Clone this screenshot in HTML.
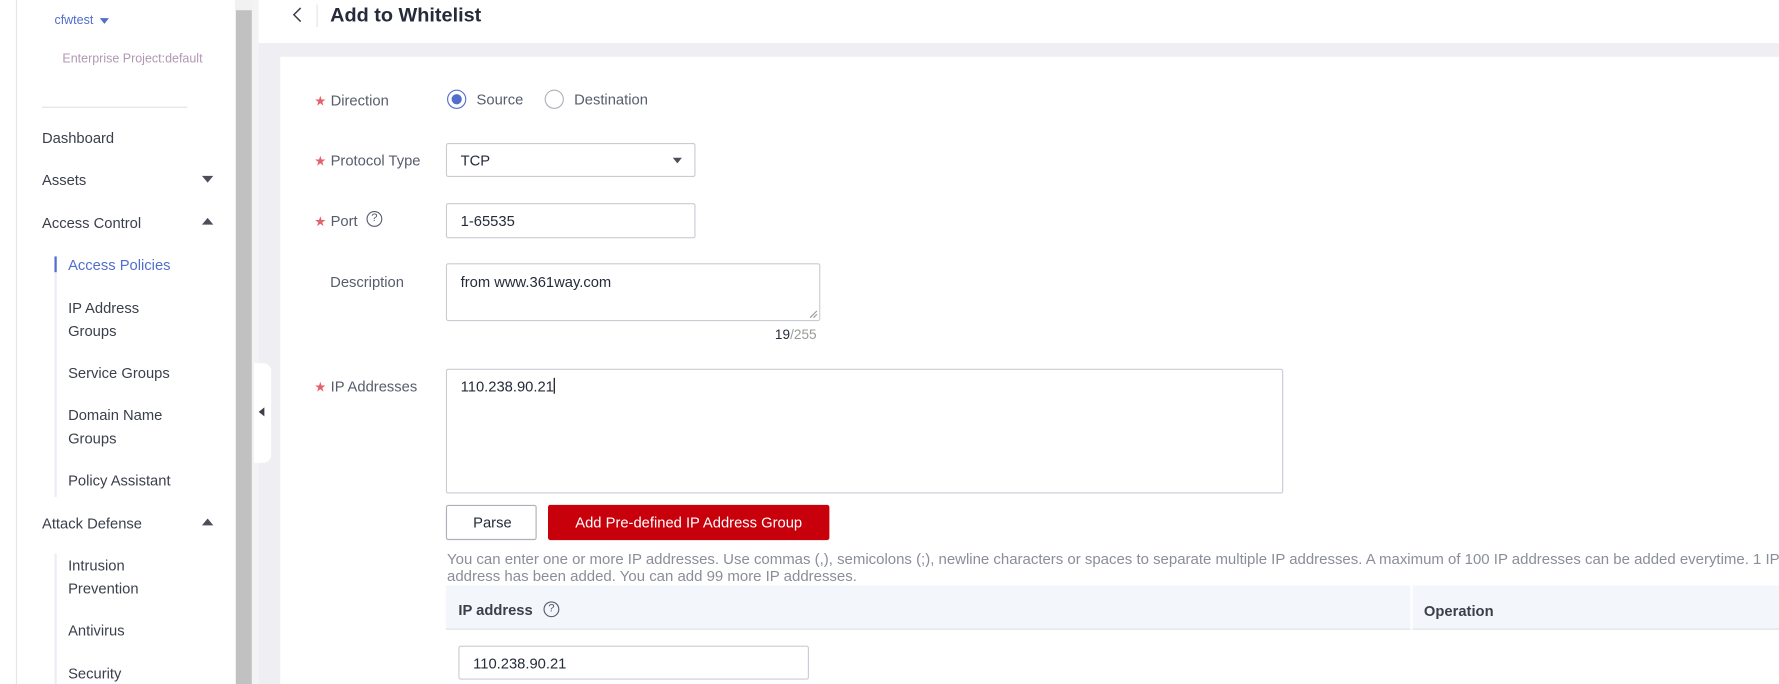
<!DOCTYPE html>
<html><head><meta charset="utf-8"><style>
*{box-sizing:border-box;margin:0;padding:0}
html,body{width:1779px;height:684px;overflow:hidden;background:#fff}
#w{position:absolute;left:0;top:0;width:1568px;height:603px;overflow:hidden;transform:scale(1.1346);transform-origin:0 0;font-family:"Liberation Sans",Arial,sans-serif;color:#252b3a;font-size:13px}
.a{position:absolute;white-space:nowrap}
.m{font-size:13px;color:#3a3f4b}
.s{font-size:13px;color:#575d6c}
.lbl{font-size:13px;color:#575d6c}
.st{color:#e5606a;font-size:12px}
.box{position:absolute;border:1px solid #c9ccd3;border-radius:2px;background:#fff}
.tri-d{width:0;height:0;border-left:5px solid transparent;border-right:5px solid transparent;border-top:6px solid #4a4f5a;position:absolute}
.tri-u{width:0;height:0;border-left:5px solid transparent;border-right:5px solid transparent;border-bottom:6px solid #4a4f5a;position:absolute}
.q{position:absolute;width:14px;height:14px;border:1.2px solid #575d6c;border-radius:50%;font-size:10px;text-align:center;line-height:12px;color:#575d6c}
</style></head><body><div id="w">
<div class="a" style="left:14px;top:0;width:1px;height:603px;background:#e6e6e6"></div>
<div class="a" style="left:48px;top:12px;font-size:11px;color:#526ecc">cfwtest</div>
<div class="tri-d" style="left:88px;top:16px;border-top-color:#526ecc;border-left-width:4px;border-right-width:4px;border-top-width:5px"></div>
<div class="a" style="left:55px;top:46px;font-size:11px;color:#b197b4">Enterprise Project:default</div>
<div class="a" style="left:37px;top:94px;width:128px;height:1px;background:#e0e2e6"></div>
<div class="a m" style="left:37px;top:114px">Dashboard</div>
<div class="a m" style="left:37px;top:151px">Assets</div>
<div class="tri-d" style="left:178px;top:155px"></div>
<div class="a m" style="left:37px;top:189px">Access Control</div>
<div class="tri-u" style="left:178px;top:192px"></div>
<div class="a" style="left:48px;top:226px;width:2px;height:14px;background:#526ecc"></div>
<div class="a" style="left:48px;top:240px;width:2px;height:198px;background:#eceef1"></div>
<div class="a m" style="left:60px;top:226px;color:#526ecc">Access Policies</div>
<div class="a m" style="left:60px;top:264px">IP Address</div>
<div class="a m" style="left:60px;top:284px">Groups</div>
<div class="a m" style="left:60px;top:321px">Service Groups</div>
<div class="a m" style="left:60px;top:358px">Domain Name</div>
<div class="a m" style="left:60px;top:379px">Groups</div>
<div class="a m" style="left:60px;top:416px">Policy Assistant</div>
<div class="a m" style="left:37px;top:454px">Attack Defense</div>
<div class="tri-u" style="left:178px;top:457px"></div>
<div class="a" style="left:48px;top:488px;width:2px;height:115px;background:#eceef1"></div>
<div class="a m" style="left:60px;top:491px">Intrusion</div>
<div class="a m" style="left:60px;top:511px">Prevention</div>
<div class="a m" style="left:60px;top:548px">Antivirus</div>
<div class="a m" style="left:60px;top:586px">Security</div>
<div class="a" style="left:207px;top:0;width:15px;height:603px;background:#f1f1f1"></div>
<div class="a" style="left:208px;top:9px;width:14px;height:594px;background:#c1c1c1"></div>
<div class="a" style="left:222px;top:0;width:6px;height:603px;background:#f3f3f6"></div>
<div class="a" style="left:228px;top:0;width:1340px;height:38px;background:#fff"></div>
<svg class="a" style="left:256px;top:5px" width="12" height="16"><path d="M9 2 L3 8 L9 14" fill="none" stroke="#3a3f4b" stroke-width="1.3"/></svg>
<div class="a" style="left:279px;top:4px;width:1px;height:20px;background:#e3e3e3"></div>
<div class="a" style="left:291px;top:3px;font-size:17.5px;font-weight:bold;color:#252b3a">Add to Whitelist</div>
<div class="a" style="left:228px;top:38px;width:1340px;height:12px;background:#eeeef3"></div>
<div class="a" style="left:228px;top:50px;width:19px;height:553px;background:#eeeef3"></div>
<div class="a" style="left:224px;top:320px;width:15px;height:88px;background:#fff;border-radius:0 7px 7px 0"></div>
<div class="a" style="left:228px;top:359px;width:0;height:0;border-top:4px solid transparent;border-bottom:4px solid transparent;border-right:5px solid #3a3f4b"></div>
<div class="a lbl" style="left:277px;top:81px"><span class="st">★</span> Direction</div>
<div class="a" style="left:394px;top:79px;width:17px;height:17px;border:1px solid #526ecc;border-radius:50%"></div>
<div class="a" style="left:398px;top:83px;width:9px;height:9px;background:#526ecc;border-radius:50%"></div>
<div class="a s" style="left:420px;top:80px">Source</div>
<div class="a" style="left:480px;top:79px;width:17px;height:17px;border:1px solid #adb0b8;border-radius:50%"></div>
<div class="a s" style="left:506px;top:80px">Destination</div>
<div class="a lbl" style="left:277px;top:134px"><span class="st">★</span> Protocol Type</div>
<div class="box" style="left:393px;top:126px;width:220px;height:30px"></div>
<div class="a" style="left:406px;top:134px;color:#252b3a">TCP</div>
<div class="tri-d" style="left:593px;top:139px;border-left-width:4px;border-right-width:4px;border-top-width:5px"></div>
<div class="a lbl" style="left:277px;top:187px"><span class="st">★</span> Port</div>
<div class="q" style="left:323px;top:186px">?</div>
<div class="box" style="left:393px;top:179px;width:220px;height:31px"></div>
<div class="a" style="left:406px;top:187px">1-65535</div>
<div class="a lbl" style="left:291px;top:241px">Description</div>
<div class="box" style="left:393px;top:232px;width:330px;height:51px"></div>
<div class="a" style="left:406px;top:241px">from www.361way.com</div>
<svg class="a" style="left:713px;top:273px" width="8" height="8"><path d="M7 1 L1 7 M7 4 L4 7" stroke="#999" stroke-width="1"/></svg>
<div class="a" style="left:683px;top:288px;font-size:12px;color:#999"><span style="color:#252b3a">19</span>/255</div>
<div class="a lbl" style="left:277px;top:333px"><span class="st">★</span> IP Addresses</div>
<div class="box" style="left:393px;top:325px;width:738px;height:110px"></div>
<div class="a" style="left:406px;top:333px">110.238.90.21<span style="display:inline-block;width:1px;height:14px;background:#000;vertical-align:-2px"></span></div>
<div class="box" style="left:393px;top:445px;width:80px;height:31px;border-color:#adb0b8"></div>
<div class="a" style="left:417px;top:453px">Parse</div>
<div class="a" style="left:483px;top:445px;width:248px;height:31px;background:#c7000b;border-radius:2px;color:#fff;text-align:center;line-height:31px">Add Pre-defined IP Address Group</div>
<div class="a" style="left:394px;top:485px;font-size:13.2px;color:#8a8e99;line-height:15px">You can enter one or more IP addresses. Use commas (,), semicolons (;), newline characters or spaces to separate multiple IP addresses. A maximum of 100 IP addresses can be added everytime. 1 IP<br>address has been added. You can add 99 more IP addresses.</div>
<div class="a" style="left:393px;top:516px;width:1175px;height:39px;background:#f3f6fb;border-bottom:1px solid #dfe1e6"></div>
<div class="a" style="left:1243px;top:516px;width:2px;height:39px;background:#fff"></div>
<div class="a" style="left:404px;top:530px;font-weight:bold;color:#3a3f4b">IP address</div>
<div class="q" style="left:479px;top:530px">?</div>
<div class="a" style="left:1255px;top:531px;font-weight:bold;color:#3a3f4b">Operation</div>
<div class="box" style="left:404px;top:569px;width:309px;height:30px"></div>
<div class="a" style="left:417px;top:577px">110.238.90.21</div>
</div></body></html>
